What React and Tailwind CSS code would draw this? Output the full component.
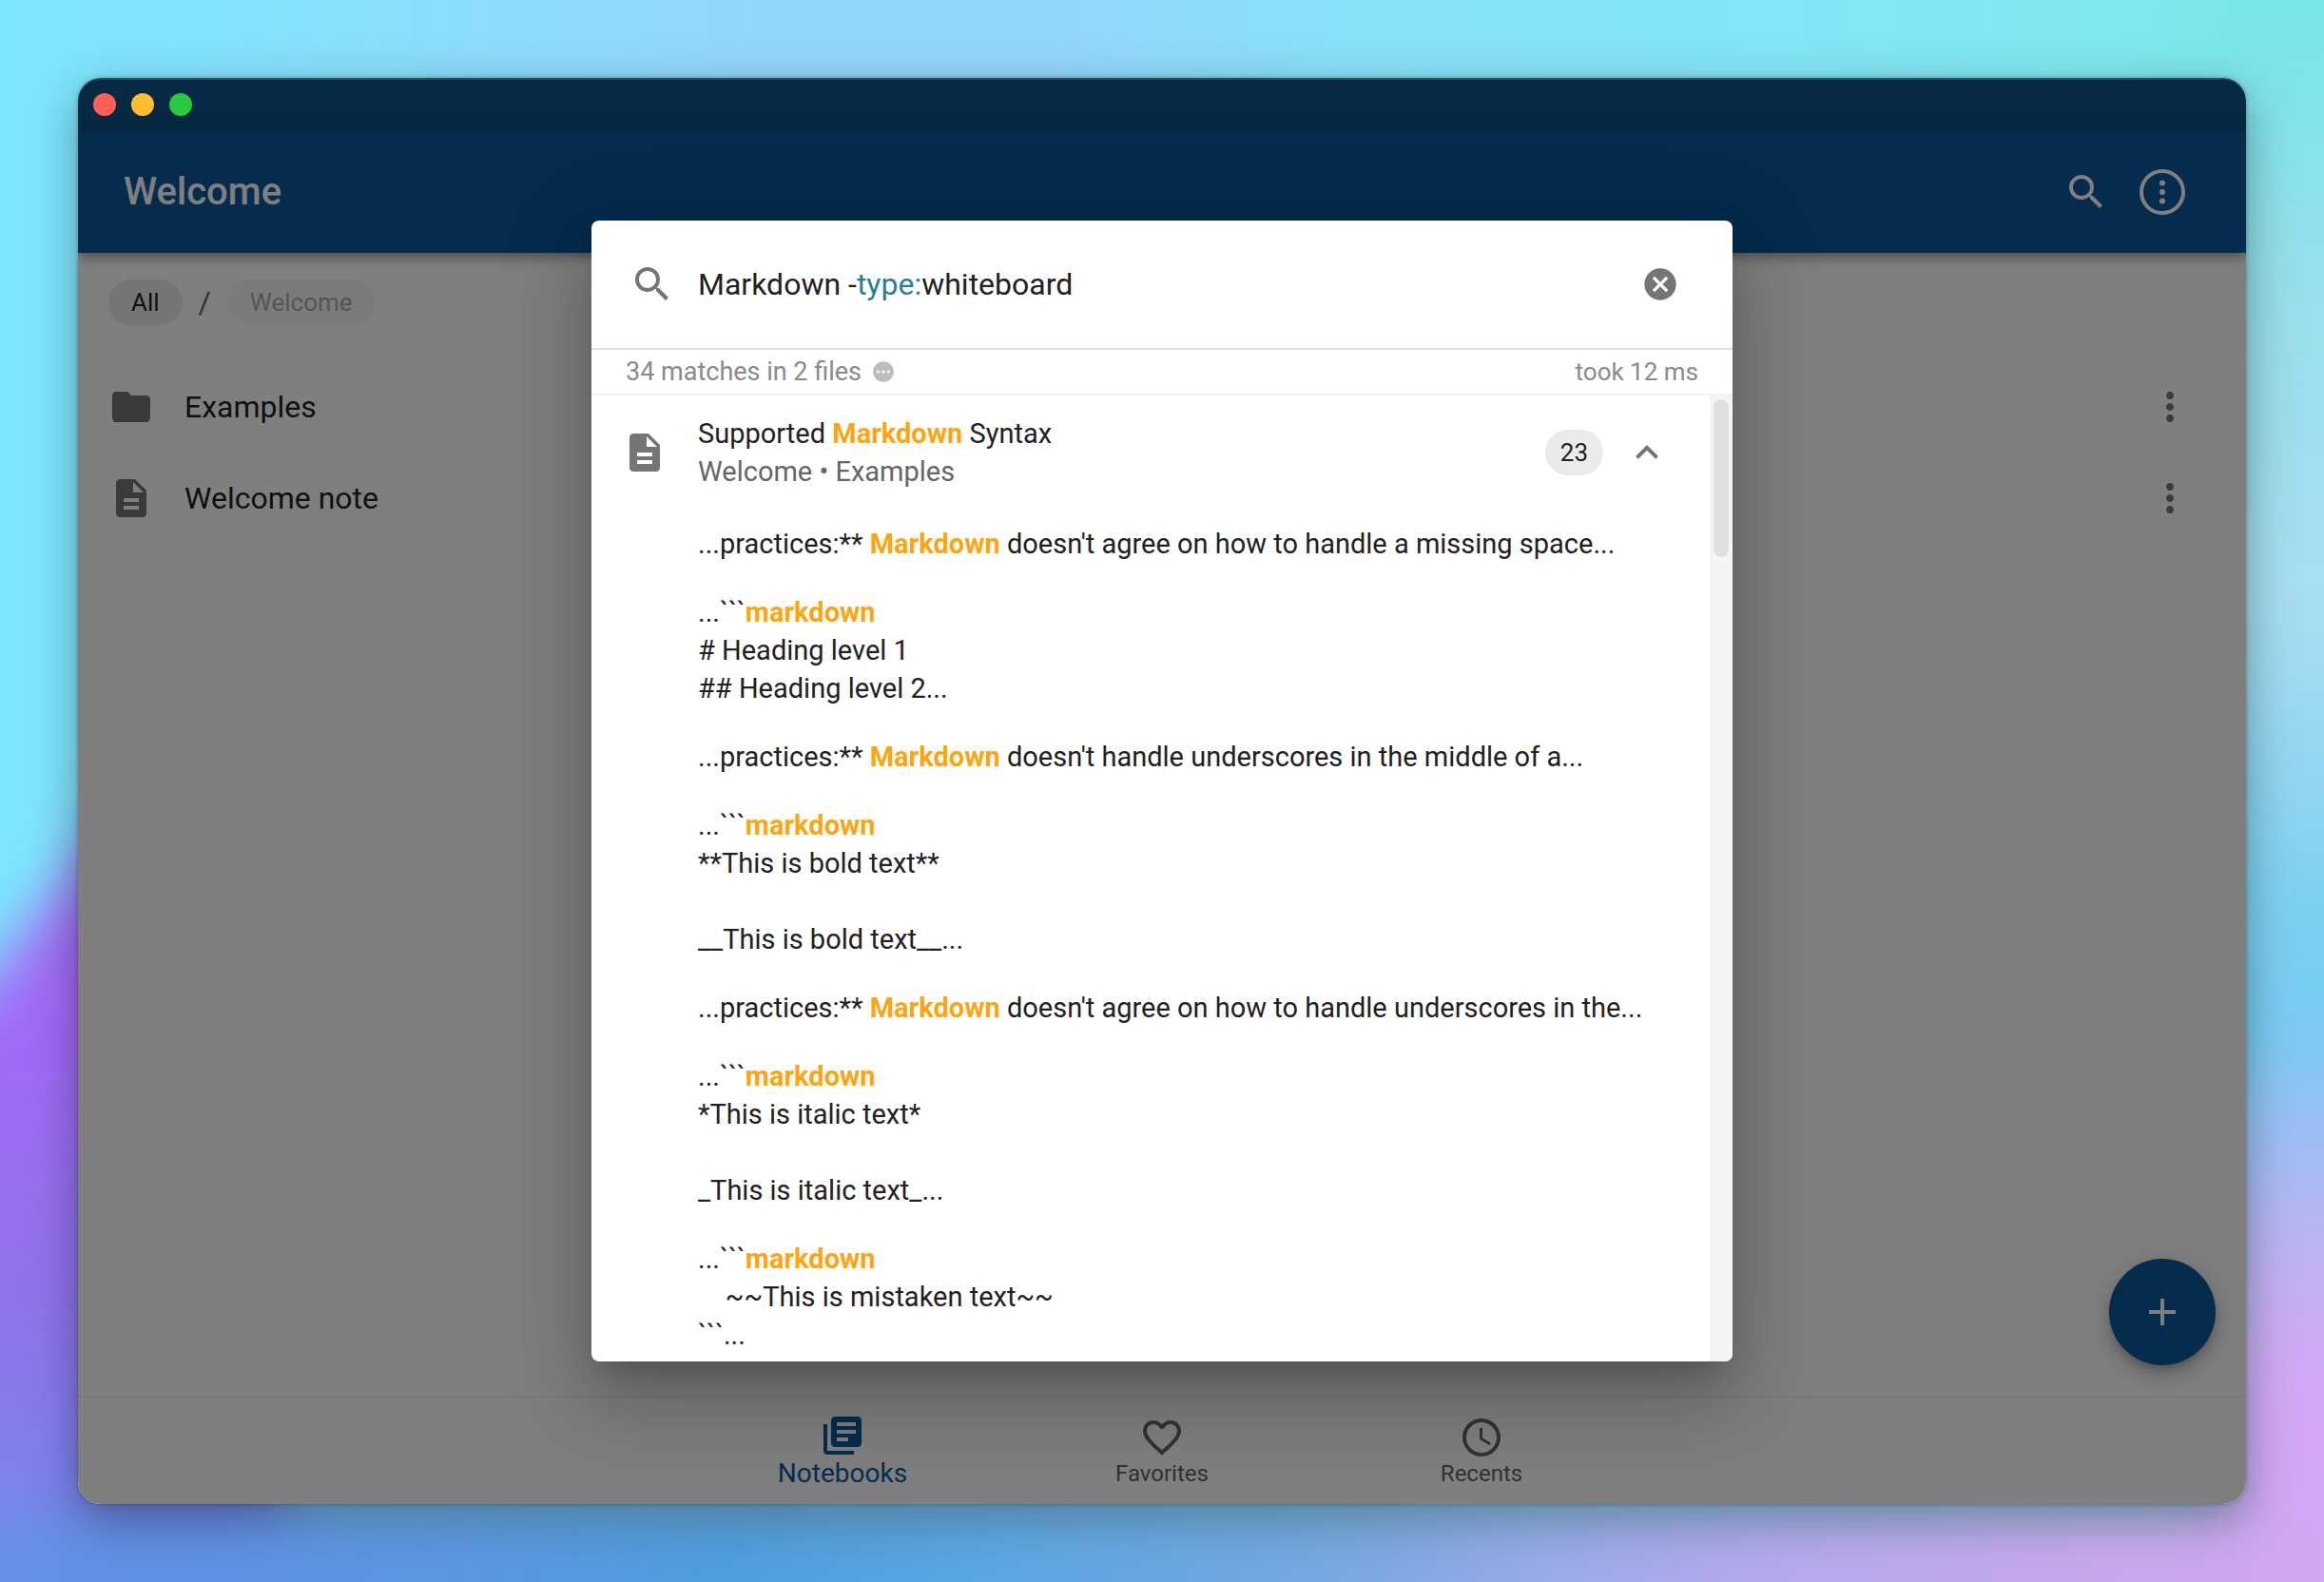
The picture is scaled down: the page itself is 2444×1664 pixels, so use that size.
import React from "react";
import {
  MdSearch, MdCancel, MdDescription, MdExpandLess, MdPending, MdFolder,
  MdMoreVert, MdAdd, MdLibraryBooks, MdFavoriteBorder, MdAccessTime,
} from "react-icons/md";

const HIT = "bg-transparent font-bold text-[#faa613]";

const snippets = [
  ["...practices:** ", "Markdown", " doesn't agree on how to handle a missing space..."],
  ["...```", "markdown", "\n# Heading level 1\n## Heading level 2..."],
  ["...practices:** ", "Markdown", " doesn't handle underscores in the middle of a..."],
  ["...```", "markdown", "\n**This is bold text**\n\n__This is bold text__..."],
  ["...practices:** ", "Markdown", " doesn't agree on how to handle underscores in the..."],
  ["...```", "markdown", "\n*This is italic text*\n\n_This is italic text_..."],
  ["...```", "markdown", "\n    ~~This is mistaken text~~\n```..."],
];

const TOP = [[0, "#7ce7fd"], [16, "#8adffb"], [33, "#93d6fb"], [45, "#93d6fb"], [57, "#8ae0f8"], [74, "#84e5f8"], [90, "#80e8f0"], [100, "#74e6e6"]];
const RIGHT = [[0, "#76e6ea"], [16, "#98dfec"], [33, "#a8def2"], [40, "#9ad8f2"], [50, "#7dd0f0"], [57, "#78ccf4"], [62, "#98c0f6"], [68, "#bab4f2"], [76, "#d2a8f4"], [100, "#d2a6f5"]];
const BOTTOM = [[0, "#6d92ec"], [12, "#6090e2"], [23, "#5b96e0"], [33, "#4f9ddc"], [43, "#5aa6e2"], [56, "#7aa8e2"], [63, "#9aaae8"], [71, "#b4a8ec"], [82, "#c6a8ec"], [96, "#d6a8f6"]];
const PURPLE = [[0, "#a070f4"], [33, "#a06af6"], [58, "#8d74ea"], [78, "#7688ee"], [86, "#6c92ea"]];

function Ramp({ id, stops, vertical }) {
  return (
    <linearGradient id={id} x1="0" y1="0" x2={vertical ? 0 : 1} y2={vertical ? 1 : 0}>
      {stops.map(([at, color]) => <stop key={at} offset={`${at}%`} stopColor={color} />)}
    </linearGradient>
  );
}

function Wallpaper() {
  return (
    <svg aria-hidden="true" className="absolute inset-0 h-full w-full" viewBox="0 0 2444 1664" preserveAspectRatio="none">
      <defs>
        <Ramp id="top" stops={TOP} />
        <Ramp id="bottom" stops={BOTTOM} />
        <Ramp id="right" stops={RIGHT} vertical />
        <Ramp id="purple" stops={PURPLE} vertical />
        <filter id="soft" filterUnits="userSpaceOnUse" x="-400" y="-400" width="3244" height="2464"><feGaussianBlur stdDeviation="30" /></filter>
      </defs>
      <rect width="2444" height="1664" fill="url(#top)" />
      <g filter="url(#soft)">
        <path d="M2330 30 L2444 0 L2700 0 V1900 H2330Z" fill="url(#right)" />
        <path d="M-200 1250 L0 1015 L110 870 L300 700 V1900 H-200Z" fill="url(#purple)" />
        <path d="M-200 1660 L80 1580 H2364 L2700 1620 V1900 H-200Z" fill="url(#bottom)" />
      </g>
    </svg>
  );
}

function OptionsIcon() {
  return (
    <svg viewBox="0 0 48 48" className="size-12" aria-hidden="true">
      <circle cx="24" cy="24" r="22" fill="none" stroke="currentColor" strokeWidth="4" />
      <circle cx="24" cy="14.6" r="3" fill="currentColor" />
      <circle cx="24" cy="24" r="3" fill="currentColor" />
      <circle cx="24" cy="33.4" r="3" fill="currentColor" />
    </svg>
  );
}

function Row({ icon: Icon, label }) {
  return (
    <li className="flex h-24 items-center pr-14 pl-8">
      <Icon className="size-12 shrink-0 text-[#757575]" />
      <span className="ml-8 grow text-[32px] leading-[48px] text-[#212121]">{label}</span>
      <button type="button" aria-label={`Actions for ${label}`} className="text-[#757575]">
        <MdMoreVert className="size-12" />
      </button>
    </li>
  );
}

function NavItem({ icon: Icon, label, active }) {
  return (
    <button
      type="button"
      className={
        "flex w-[336px] flex-col items-center justify-center " +
        (active ? "text-[28px] leading-8 text-[#0b5a9c]" : "text-[24px] leading-7 text-[#666666]")
      }
    >
      <Icon className="size-12" />
      <span>{label}</span>
    </button>
  );
}

function SearchDialog() {
  return (
    <section
      role="dialog"
      aria-label="Search notes"
      className="flex h-4/5 w-full max-w-[1200px] flex-col overflow-hidden rounded-lg bg-white text-[#212121] shadow-[0_22px_30px_-14px_rgba(0,0,0,0.2),0_48px_76px_6px_rgba(0,0,0,0.14),0_18px_92px_16px_rgba(0,0,0,0.12)]"
    >
      <div className="flex h-[136px] shrink-0 items-center border-b-2 border-[#e0e0e0] pr-14 pl-10">
        <MdSearch className="size-12 shrink-0 text-[#757575]" />
        <div role="textbox" aria-label="Search" contentEditable suppressContentEditableWarning className="ml-6 grow text-[32px] leading-[48px] outline-none">
          Markdown -<span className="text-[#267f99]">type:</span>whiteboard
        </div>
        <button type="button" aria-label="Clear search" className="text-[#757575]">
          <MdCancel className="size-10" />
        </button>
      </div>
      <div className="flex h-12 shrink-0 items-center border-b-2 border-[#f2f2f2] px-9 text-[26px] leading-10 text-[#8a8a8a]">
        <span className="text-[27px]">34 matches in 2 files</span>
        <MdPending className="ml-2.5 size-[26px] text-[#bdbdbd]" />
        <span className="ml-auto">took 12 ms</span>
      </div>
      <div className="flex min-h-0 grow">
        <div className="min-w-0 grow overflow-hidden text-[29px] leading-10">
          <div className="flex h-[120px] items-center pr-[42px] pl-8">
            <MdDescription className="size-12 shrink-0 text-[#757575]" />
            <div className="ml-8 grow">
              <h2>Supported <mark className={HIT}>Markdown</mark> Syntax</h2>
              <p className="text-[#666666]">Welcome • Examples</p>
            </div>
            <span className="rounded-full bg-[#ebebeb] px-4 text-[26px] leading-[48px]">23</span>
            <button type="button" aria-label="Collapse matches" className="ml-[22px] text-[#757575]">
              <MdExpandLess className="size-12" />
            </button>
          </div>
          <ul>
            {snippets.map(([before, hit, after], i) => (
              <li key={i} className="py-4 pr-8 pl-28 whitespace-pre-wrap">
                {before}<mark className={HIT}>{hit}</mark>{after}
              </li>
            ))}
          </ul>
        </div>
        <div className="w-6 shrink-0 bg-[#f5f5f5] p-1">
          <div className="h-[166px] rounded-full bg-[#e0e0e0]" />
        </div>
      </div>
    </section>
  );
}

export default function App() {
  return (
    <main className="relative h-screen overflow-hidden p-[82px] font-['Roboto',sans-serif]">
      <Wallpaper />
      <div className="relative flex h-full flex-col overflow-hidden rounded-3xl bg-white shadow-[0_16px_50px_rgba(0,0,0,0.36),0_0_4px_rgba(0,0,0,0.3)]">
        <div className="h-14 shrink-0 bg-[#0c5288]" />
        <header className="z-10 flex h-32 shrink-0 items-center bg-[#0b599b] pr-16 pl-12 text-white shadow-[0_4px_8px_-2px_rgba(0,0,0,0.2),0_8px_10px_rgba(0,0,0,0.14),0_2px_20px_rgba(0,0,0,0.12)]">
          <h1 className="grow text-[40px] leading-[64px] font-medium">Welcome</h1>
          <button type="button" aria-label="Search"><MdSearch className="size-12" /></button>
          <button type="button" aria-label="Options" className="ml-8"><OptionsIcon /></button>
        </header>
        <div className="relative flex min-h-0 grow flex-col">
          <nav aria-label="Breadcrumb" className="flex items-center px-8 pt-7 text-[26px] leading-[48px]">
            <button type="button" className="rounded-full bg-[#ebebeb] px-6 text-[#212121]">All</button>
            <span className="mx-[17px] text-[32px] text-[#666666]">/</span>
            <button type="button" disabled className="rounded-full bg-[#f7f7f7] px-6 text-[#ababab]">Welcome</button>
          </nav>
          <ul className="mt-[38px]">
            <Row icon={MdFolder} label="Examples" />
            <Row icon={MdDescription} label="Welcome note" />
          </ul>
          <button
            type="button"
            aria-label="Create"
            className="absolute right-8 bottom-8 flex size-28 items-center justify-center rounded-full bg-[#0b599b] text-white shadow-[0_6px_10px_-2px_rgba(0,0,0,0.2),0_12px_20px_rgba(0,0,0,0.14),0_2px_36px_rgba(0,0,0,0.12)]"
          >
            <MdAdd className="size-12" />
          </button>
        </div>
        <nav aria-label="Sections" className="flex h-[114px] shrink-0 justify-center border-t-2 border-[#f2f2f2]">
          <NavItem icon={MdLibraryBooks} label="Notebooks" active />
          <NavItem icon={MdFavoriteBorder} label="Favorites" />
          <NavItem icon={MdAccessTime} label="Recents" />
        </nav>
        <div className="absolute inset-0 z-20 flex items-center justify-center rounded-3xl bg-black/50 shadow-[inset_0_2px_0_rgba(255,255,255,0.15)]">
          <SearchDialog />
        </div>
        <div className="absolute top-4 left-4 z-30 flex gap-4">
          <button type="button" aria-label="Close window" className="size-6 rounded-full bg-[#ff5f57]" />
          <button type="button" aria-label="Minimize window" className="size-6 rounded-full bg-[#febc2e]" />
          <button type="button" aria-label="Zoom window" className="size-6 rounded-full bg-[#28c840]" />
        </div>
      </div>
    </main>
  );
}
